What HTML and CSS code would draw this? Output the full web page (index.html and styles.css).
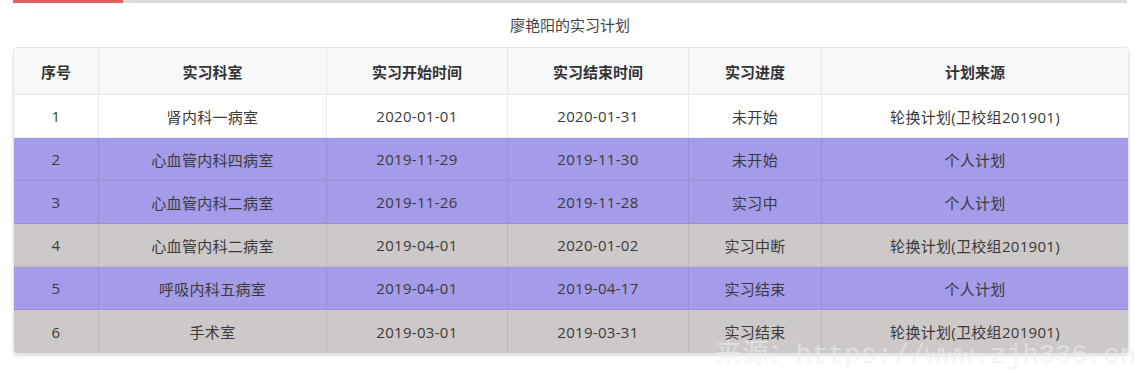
FILE: index.html
```html
<!DOCTYPE html>
<html lang="zh-CN">
<head>
<meta charset="utf-8">
<title>实习计划</title>
<link rel="stylesheet" href="styles.css">
</head>
<body>
<div class="page">
  <div class="progress"><div class="progress-fill"></div></div>
  <div class="title">廖艳阳的实习计划</div>
  <table class="plan">
    <colgroup>
      <col class="c1"><col class="c2"><col class="c3"><col class="c4"><col class="c5"><col class="c6">
    </colgroup>
    <thead>
      <tr><th>序号</th><th>实习科室</th><th>实习开始时间</th><th>实习结束时间</th><th>实习进度</th><th>计划来源</th></tr>
    </thead>
    <tbody>
      <tr class="white"><td>1</td><td>肾内科一病室</td><td>2020-01-01</td><td>2020-01-31</td><td>未开始</td><td>轮换计划(卫校组201901)</td></tr>
      <tr class="purple"><td>2</td><td>心血管内科四病室</td><td>2019-11-29</td><td>2019-11-30</td><td>未开始</td><td>个人计划</td></tr>
      <tr class="purple"><td>3</td><td>心血管内科二病室</td><td>2019-11-26</td><td>2019-11-28</td><td>实习中</td><td>个人计划</td></tr>
      <tr class="grey"><td>4</td><td>心血管内科二病室</td><td>2019-04-01</td><td>2020-01-02</td><td>实习中断</td><td>轮换计划(卫校组201901)</td></tr>
      <tr class="purple"><td>5</td><td>呼吸内科五病室</td><td>2019-04-01</td><td>2019-04-17</td><td>实习结束</td><td>个人计划</td></tr>
      <tr class="grey last"><td>6</td><td>手术室</td><td>2019-03-01</td><td>2019-03-31</td><td>实习结束</td><td>轮换计划(卫校组201901)</td></tr>
    </tbody>
  </table>
  <div class="watermark">来源：https://www.zjh336.cn</div>
</div>
</body>
</html>
```

FILE: styles.css
```css
* { box-sizing: border-box; }
html, body { margin: 0; padding: 0; background: #fff; }
body {
  font-family: "Open Sans", "Noto Sans CJK SC", sans-serif;
  font-size: 15px;
  color: #333;
  width: 1138px;
  height: 373px;
  overflow: hidden;
}
.page {
  position: relative;
  padding: 0 11px 0 13px;
  height: 373px;
}
.progress {
  height: 3px;
  background: #dcdcdc;
  display: flex;
}
.progress-fill {
  width: 110px;
  background: #e06060;
}
.title {
  height: 44px;
  display: flex;
  align-items: center;
  justify-content: center;
  color: #444;
  font-size: 15px;
  padding-bottom: 1px;
}
.plan {
  width: 1114px;
  border-collapse: separate;
  border-spacing: 0;
  table-layout: fixed;
  border: 1px solid #e4e6ea;
  border-radius: 4px;
  overflow: hidden;
  box-shadow: 0 2px 3px rgba(0,0,0,0.12);
}
.c1 { width: 85px; }
.c2 { width: 228px; }
.c3 { width: 181px; }
.c4 { width: 181px; }
.c5 { width: 133px; }
.c6 { width: 306px; }
.plan th, .plan td {
  text-align: center;
  padding: 0;
  border-right: 1px solid rgba(0,0,0,0.08);
  border-bottom: 1px solid rgba(0,0,0,0.08);
  white-space: nowrap;
}
.plan th:last-child, .plan td:last-child { border-right: none; }
.plan tr.last td { border-bottom: none; }
.plan th {
  height: 47px;
  background: #f7f8fa;
  font-weight: bold;
  color: #333;
  border-color: #e6e8eb;
}
.plan td {
  height: 43px;
  color: #3a3a3a;
  letter-spacing: 0.3px;
}
.white td { background: #fff; border-color: #ebebeb; }
.purple td { background: #a39ce9; }
.grey td { background: #cdc9c8; }
.watermark {
  position: absolute;
  right: 2px;
  bottom: 2px;
  line-height: 30px;
  font-family: "Liberation Mono", "Noto Sans CJK SC", monospace;
  font-size: 27px;
  color: rgba(238,238,238,0.6);
  white-space: nowrap;
  pointer-events: none;
}
```
